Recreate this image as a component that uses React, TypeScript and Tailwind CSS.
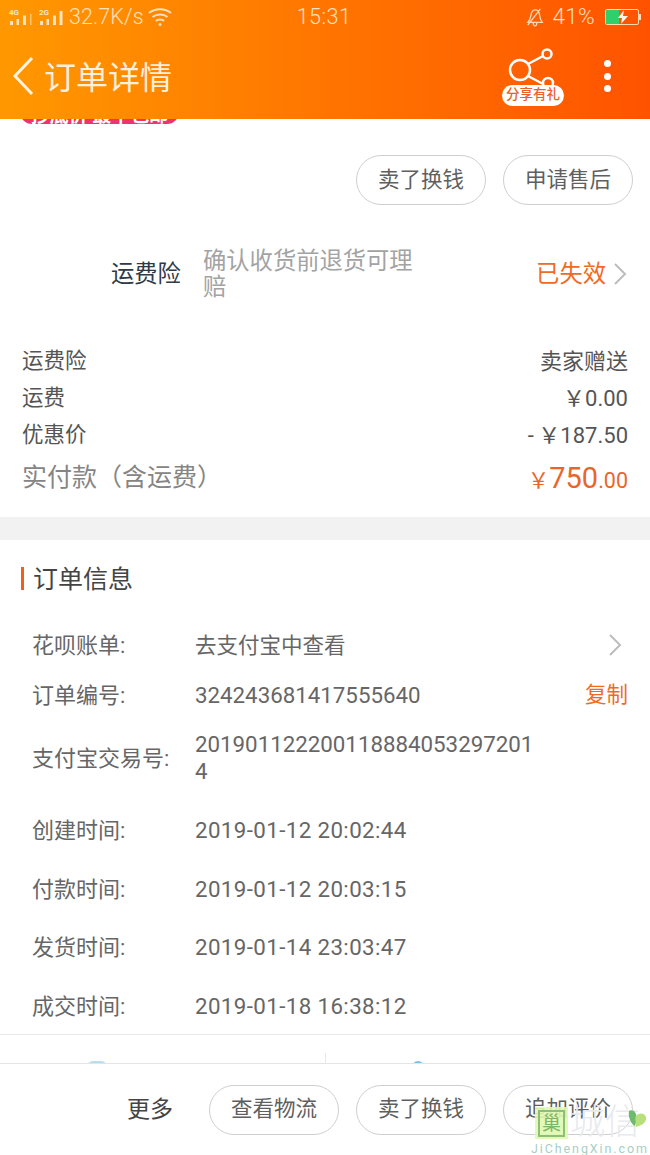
import React from "react";

function Signal({ tag, dim }: { tag: string; dim?: boolean }) {
  return (
    <svg width="24" height="20" viewBox="0 0 24 20" fill="#ffe3c0">
      <text x="0" y="7.500" fontSize="8" fontWeight="700" fontFamily="Roboto, sans-serif" fill="#ffe3c0">{tag}</text>
      <rect x="1" y="14" width="3" height="4" />
      <rect x="7.500" y="12" width="2.500" height="6" />
      <rect x="14" y="8.500" width="3" height="9.500" />
      <rect x={dim ? 21 : 20.500} y={dim ? 7 : 4} width={dim ? 1.500 : 3} height={dim ? 11 : 14} opacity={dim ? 0.6 : 1} />
    </svg>
  );
}

function Chevron() {
  return (
    <svg width="14" height="22" viewBox="0 0 14 22" fill="none" stroke="#bdbdbd" strokeWidth="2">
      <path d="M2 1l10 10L2 21" />
    </svg>
  );
}

function Pill({ children }: { children: React.ReactNode }) {
  return (
    <div className="w-[130px] h-[50px] rounded-[25px] border border-[#cfcfcf] flex items-center justify-center text-[21.500px] text-[#5f5f5f] bg-white">
      {children}
    </div>
  );
}

function CostRow({ left, right }: { left: string; right: string }) {
  return (
    <div className="h-[37px] flex items-center justify-between text-[21.500px] text-[#555555]">
      <span>{left}</span>
      <span className="text-[22px]">{right}</span>
    </div>
  );
}

function InfoRow({ label, children, h, right, extra }: { label: string; children: React.ReactNode; h: string; right?: React.ReactNode; extra?: string }) {
  return (
    <div className={`${h} ${extra ?? ""} shrink-0 flex items-center pl-[32px] pr-[22px]`}>
      <span className="w-[163px] text-[22px] text-[#666666] shrink-0">{label}</span>
      <span className="w-[342px] text-[22.300px] leading-[27px] text-[#666666] break-all">{children}</span>
      <span className="flex-1 flex justify-end">{right}</span>
    </div>
  );
}

function TimeRow({ label, value, h }: { label: string; value: string; h: string }) {
  return (
    <InfoRow label={label} h={h}>
      <span className="tracking-[0.400px]">{value}</span>
    </InfoRow>
  );
}

export default function App() {
  return (
    <div
      className="relative w-[650px] h-[1155px] overflow-hidden bg-white flex flex-col"
      style={{ fontFamily: '"Roboto", "Noto Sans CJK SC", sans-serif' }}
    >
      <header className="h-[119px] shrink-0 bg-gradient-to-r from-[#ff9800] via-[#ff7500] to-[#ff5200] flex flex-col">
        <div className="h-[33px] pt-[1px] flex items-center justify-between pl-[9px] pr-[11px] text-[#ffe0bd]">
          <div className="flex-1 flex items-center">
            <Signal tag="4G" dim />
            <span className="w-[6px]" />
            <Signal tag="2G" />
            <span className="text-[21.500px] font-light tracking-[0.100px] ml-[6px]">32.7K/s</span>
            <svg className="ml-[4px]" width="24" height="20" viewBox="0 0 24 20" fill="none" stroke="#ffe0bd" strokeWidth="2">
              <path d="M1 6c6-5 16-5 22 0M4.500 10c4-3.500 11-3.500 15 0M8 14c2-2 6-2 8 0" />
              <circle cx="12" cy="17.500" r="1.500" fill="#ffe0bd" stroke="none" />
            </svg>
          </div>
          <span className="text-[21.500px] font-light tracking-[0.500px] w-[62px] text-center">15:31</span>
          <div className="flex-1 flex items-center justify-end">
            <svg width="18" height="22" viewBox="0 0 20 22" fill="none" stroke="#ffd9b0" strokeWidth="1.500">
              <path d="M2 17c2-2 3-4 3.500-8 .5-4 3-6 5-6s4 2 4.500 5.500c.5 4 1.500 6.500 3 8.500zM8 17c0 5 4 5 4 0M2 20L16 2" />
            </svg>
            <span className="ml-[9px] text-[22.500px] font-light tracking-[0.300px]">41%</span>
            <div className="relative ml-[10px] w-[34px] h-[16px] border border-[#ffd9b0] rounded-[2px] overflow-hidden">
              <div className="w-[13px] h-full bg-[#2fd06a]" />
              <svg className="absolute left-[10px] top-0" width="14" height="14" viewBox="0 0 14 14" fill="#fff5e5">
                <path d="M8 0L2 8h4l-1 6 7-8H7z" />
              </svg>
            </div>
            <div className="w-[2px] h-[6px] bg-[#ffd9b0] mr-[-2px]" />
          </div>
        </div>
        <div className="flex-1 flex items-center pl-[12px] pr-[39px]">
          <svg width="22" height="40" viewBox="0 0 22 40" fill="none" stroke="#fff3df" strokeWidth="3">
            <path d="M20 2L3 20l17 18" />
          </svg>
          <span className="ml-[10px] mt-[3px] text-[32px] text-[#fff0dc] flex-1 leading-none">订单详情</span>
          <div className="relative w-[62px] h-[62px] mt-[-1px]">
            <svg className="absolute left-0 top-0" width="62" height="62" viewBox="0 0 62 62" fill="none" stroke="#fff" strokeWidth="2.500">
              <circle cx="18" cy="25" r="10" />
              <circle cx="45" cy="9" r="4.500" />
              <circle cx="46" cy="38" r="5" />
              <path d="M26 19l15-8M26 31l15 8" />
            </svg>
            <div className="absolute left-0 top-[40px] w-[62px] h-[21px] rounded-[11px] bg-white text-[#e8622a] text-[13.500px] font-medium flex items-center justify-center leading-none">
              分享有礼
            </div>
          </div>
          <div className="ml-[40px] flex flex-col gap-[5.500px]">
            <div className="w-[7px] h-[7px] rounded-full bg-white" />
            <div className="w-[7px] h-[7px] rounded-full bg-white" />
            <div className="w-[7px] h-[7px] rounded-full bg-white" />
          </div>
        </div>
      </header>

      <main className="flex-1 min-h-0 flex flex-col">
        <div className="h-[6px] shrink-0 pl-[20px] overflow-hidden">
          <div className="w-[159px] h-[24px] mt-[-19px] rounded-[12px] bg-[#ee3470] text-white text-[19px] leading-[31px] text-center font-bold whitespace-nowrap">
            抄底价 最平包邮
          </div>
        </div>

        <div className="h-[30px] shrink-0" />
        <div className="flex justify-end gap-[17px] pr-[17px]">
          <Pill>卖了换钱</Pill>
          <Pill>申请售后</Pill>
        </div>

        <div className="h-[42px] shrink-0" />
        <div className="h-[54px] shrink-0 flex items-center pl-[111px] pr-[23px]">
          <span className="w-[92px] text-[23.300px] text-[#2d3a4a]">运费险</span>
          <span className="w-[215px] text-[23.300px] leading-[26px] text-[#a3a3a3]">确认收货前退货可理赔</span>
          <span className="ml-auto text-[23.300px] text-[#f06a1f] mr-[7px]">已失效</span>
          <Chevron />
        </div>

        <div className="h-[42px] shrink-0" />
        <div className="px-[22px]">
          <CostRow left="运费险" right="卖家赠送" />
          <CostRow left="运费" right="￥0.00" />
          <CostRow left="优惠价" right={"-\u2009￥187.50"} />
          <div className="h-[44px] pt-[4px] flex items-center justify-between">
            <span className="text-[25px] text-[#858585]">实付款（含运费）</span>
            <span className="text-[#e8662a] text-[21.500px] flex items-baseline mt-[2px]">
              <span>￥</span><span className="text-[29px]">750</span>.00
            </span>
          </div>
        </div>

        <div className="h-[19px] shrink-0" />
        <div className="h-[23px] shrink-0 bg-[#f2f2f2]" />

        <div className="h-[80px] shrink-0 flex items-center pl-[21px]">
          <div className="w-[3px] h-[23px] bg-[#f0601c] mt-[-3px]" />
          <span className="ml-[9px] text-[25px] text-[#444444]">订单信息</span>
        </div>

        <InfoRow label="花呗账单:" h="h-[50px]" right={<span className="mr-[6px]"><Chevron /></span>}>
          <span className="text-[21.500px]">去支付宝中查看</span>
        </InfoRow>
        <InfoRow label="订单编号:" h="h-[50px]" right={<span className="text-[21.500px] text-[#f06a1f]">复制</span>}>324243681417555640</InfoRow>
        <InfoRow label="支付宝交易号:" h="h-[76px]" extra="mb-[5px]">2019011222001188840532972014</InfoRow>
        <TimeRow label="创建时间:" value="2019-01-12 20:02:44" h="h-[59px]" />
        <TimeRow label="付款时间:" value="2019-01-12 20:03:15" h="h-[58px]" />
        <TimeRow label="发货时间:" value="2019-01-14 23:03:47" h="h-[59px]" />
        <TimeRow label="成交时间:" value="2019-01-18 16:38:12" h="h-[58px]" />

        <div className="h-[30px] shrink-0 mt-[-1px] border-t border-[#e8e8e8] flex items-end">
          <div className="flex-1 h-[11px] border-r border-[#e8e8e8] flex justify-center overflow-hidden">
            <div className="w-[20px] h-[12px] mt-[8px] ml-[-130px] rounded-full bg-[#b9dcef]" />
          </div>
          <div className="flex-1 h-[11px] flex justify-center overflow-hidden">
            <div className="w-[12px] h-[12px] mt-[8px] ml-[-140px] rounded-full bg-[#7cc0e4]" />
          </div>
        </div>
      </main>

      <footer className="h-[92px] shrink-0 border-t border-[#e4e4e4] flex items-center justify-end gap-[17px] pr-[17px] bg-white">
        <span className="text-[23px] text-[#444444] mr-[19px] mt-[2px]">更多</span>
        <Pill>查看物流</Pill>
        <Pill>卖了换钱</Pill>
        <Pill>追加评价</Pill>
      </footer>

      <div className="absolute left-[531px] top-[1107px] w-[119px] h-[48px] pointer-events-none">
        <div className="absolute left-[4px] top-0 w-[33px] h-[32px] bg-[#e0f8b0]/90 flex items-center justify-center">
          <div className="w-[27px] h-[27px] border-2 border-[#8fbe78] text-[#7fb56a] text-[19px] leading-[23px] text-center">巢</div>
        </div>
        <span className="absolute left-[39px] top-[-3px] text-[35px] leading-[38px] text-[#e8eaee] font-light whitespace-nowrap">城信</span>
        <svg className="absolute left-[97px] top-[1px]" width="19" height="21" viewBox="0 0 20 20">
          <path d="M1 2C5 0 9 3 9 9c0 4-1 7-2 9C3 15 0 9 1 2z" fill="#6dbb6e" />
          <path d="M8 8c3-5 10-4 11 1 1 5-5 9-11 10 1-4-1-8 0-11z" fill="#b7df7c" />
        </svg>
        <span className="absolute left-0 top-[35px] text-[12.500px] leading-[14px] tracking-[1.900px] text-[#a6cfc4] whitespace-nowrap">JiChengXin.com</span>
      </div>
    </div>
  );
}
